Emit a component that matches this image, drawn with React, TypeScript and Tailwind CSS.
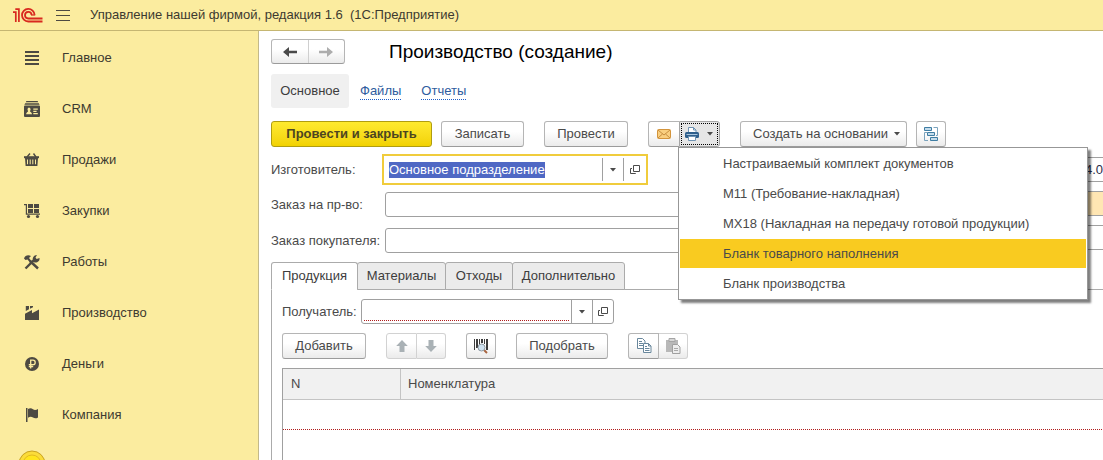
import { useEffect, useRef } from 'react';
import type { ReactNode } from 'react';
import clsx from 'clsx';

const base =
  'flex h-[26px] items-center justify-center border bg-linear-to-b from-white from-40% to-[#ebebeb] whitespace-nowrap';
const solid = 'rounded-[3px] border-[#b5b5b5] border-b-[#9b9b9b] text-[#4a4a4a]';

function Button({ children, className, label }: { children: ReactNode; className?: string; label?: string }) {
  return (
    <button type="button" aria-label={label} className={clsx(base, solid, className)}>
      {children}
    </button>
  );
}

function Caret() {
  return (
    <svg width="6" height="4" viewBox="0 0 6 4" className="shrink-0" aria-hidden="true">
      <path d="M0 0h6L3 3.6z" fill="#4a4a4a" />
    </svg>
  );
}

function OpenIcon() {
  return (
    <svg width="10" height="10" viewBox="0 0 10 10" fill="none" stroke="#4a4a4a" aria-hidden="true">
      <path d="M3.5.5h6v6h-6zM2 3.5H.5v5h5V8" />
    </svg>
  );
}

function Logo() {
  return (
    <svg width="30" height="15" viewBox="0 0 30 15" fill="none" stroke="#d8291f" aria-label="1С" role="img">
      <path d="M0 4.200h2.800V14" strokeWidth="1.700" />
      <path d="M2.300 1.100h3.600V14" strokeWidth="1.700" />
      <path d="M21.600 6.900A6.300 6.300 0 1 0 15.300 13.500H29.500" strokeWidth="1.800" />
      <path d="M18.600 7A3.300 3.300 0 1 0 15.300 10.500H29.500" strokeWidth="1.800" />
      <path d="M18 7h4.200" strokeWidth="1.200" />
    </svg>
  );
}

const dark = '#4d4a42';

const sections: { title: string; icon: ReactNode }[] = [
  {
    title: 'Главное',
    icon: <path d="M1 1h14v2H1zM1 5h14v2H1zM1 9h14v2H1zM1 13h14v2H1z" />,
  },
  {
    title: 'CRM',
    icon: (
      <>
        <path d="M2.4 0h11.2l.6 1.3H1.8zM1.2 2.3h13.6l.8 1.4H.4z" />
        <path
          fillRule="evenodd"
          d="M1 4.6h14a1 1 0 0 1 1 1V15a1 1 0 0 1-1 1H1a1 1 0 0 1-1-1V5.600a1 1 0 0 1 1-1zM5 6.400a1.700 2 0 0 0-.9 3.500C4 11.300 2.200 11 2.200 13.300h5.800C8 11 6.100 11.300 6 9.900A1.700 2 0 0 0 5 6.400zM9.300 7.500v1.200h4.500V7.500zM9.300 9.800V11h3.300V9.800zM9.300 12v1.200h4.500V12z"
        />
      </>
    ),
  },
  {
    title: 'Продажи',
    icon: (
      <>
        <path d="M3 5 6 1.500M12 5 9.500 1.500" stroke={dark} strokeWidth="1.400" />
        <path d="M0 4.200h15v2H0z" />
        <path
          fillRule="evenodd"
          d="M1 6h13l-.6 8H1.600zM3 7.500v4.800h1V7.500zM5.700 7.500v4.800h1V7.500zM8.300 7.500v4.800h1V7.500zM11 7.500v4.800h1V7.500z"
        />
      </>
    ),
  },
  {
    title: 'Закупки',
    icon: (
      <>
        <path d="M0 1h3v9.500h13v1.300H1.800V2.200H0z" />
        <path d="M4 1h5v4H4zM10 1h5v4h-5zM4 6h5v4H4zM10 6h5v4h-5z" />
        <circle cx="4.500" cy="13.500" r="1.600" />
        <circle cx="13.500" cy="13.500" r="1.600" />
      </>
    ),
  },
  {
    title: 'Работы',
    icon: (
      <>
        <path d="M1.500 14.500 9.500 6.500M6 7l8 7.500" stroke={dark} strokeWidth="2.400" />
        <path d="M0 4.500C1 1.500 4 .5 7 2L5 4l2.500 3L6 8.500 3.500 5.500 1.500 6z" />
        <path d="M9 7.500C8 4 9.500 1 13 1l-1.500 2.500 1.200 1.400L15.500 4C16 7.500 13 9 10 8.300z" />
      </>
    ),
  },
  {
    title: 'Производство',
    icon: <path d="M1.800 1H5v3.200L1.800 6zM6 1h3v1.200L6 3.800zM1 8.800 8 5v3.300L15 4.500V15H1z" />,
  },
  {
    title: 'Деньги',
    icon: (
      <>
        <circle cx="8" cy="8" r="7" />
        <path
          d="M6.700 12.500V4.200h2.300a2.200 2.200 0 0 1 0 4.400H4.800M4.800 10.500h4.400"
          fill="none"
          stroke="#fbec9f"
          strokeWidth="1.300"
        />
      </>
    ),
  },
  {
    title: 'Компания',
    icon: <path d="M2 1h1.500v14H2zM4 2c2-1 3.500-.8 5 .3 1.500 1 3.500.6 5-.3v8.500c-1.800 1.200-3.600 1-5 0s-3.200-1-5 .2z" />,
  },
];

function Coin() {
  return (
    <svg width="28" height="28" viewBox="0 0 28 28" aria-hidden="true">
      <circle cx="14" cy="14" r="13" fill="#fbdc3a" stroke="#c9a321" />
      <circle cx="14" cy="14" r="9" fill="#ffe51f" stroke="#e3bb20" />
    </svg>
  );
}

function NavArrow({ color, flip }: { color: string; flip?: boolean }) {
  return (
    <svg width="14" height="12" viewBox="0 0 14 12" className={flip ? '-scale-x-100' : ''} aria-hidden="true">
      <path d="M6 1v3.700h8v2.600H6V11L0 6z" fill={color} />
    </svg>
  );
}

function MoveArrow({ flip }: { flip?: boolean }) {
  return (
    <svg width="12" height="12" viewBox="0 0 12 12" className={flip ? '-scale-y-100' : ''} aria-hidden="true">
      <path d="M6 0l5.800 6H8.500v6h-5V6H.2z" fill="#a9b1b5" />
    </svg>
  );
}

function Envelope() {
  return (
    <svg width="14" height="10" viewBox="0 0 14 10" aria-hidden="true">
      <rect x=".5" y=".5" width="13" height="9" rx="1" fill="#f9cf80" stroke="#d3943c" />
      <path d="M1 1l6 5 6-5M1 9l4.500-4M13 9 8.500 5" fill="none" stroke="#c08436" strokeWidth=".9" />
    </svg>
  );
}

function Printer() {
  return (
    <svg width="14" height="14" viewBox="0 0 14 14" aria-hidden="true">
      <path d="M3.500 6V.5h5l2.500 2.500v3" fill="#fff" stroke="#6f93b3" />
      <path d="M8.500.5V3H11" fill="none" stroke="#6f93b3" />
      <rect y="5" width="14" height="6" rx="1.500" fill="#2f5f8c" />
      <path d="M1.500 7.500h11" stroke="#a9c6de" />
      <path d="M3.500 9.500h7v4h-7z" fill="#fff" stroke="#6f93b3" />
    </svg>
  );
}

function Structure() {
  return (
    <svg width="14" height="14" viewBox="0 0 14 14" fill="none" aria-hidden="true">
      <path d="M3 5.500H.5v8H4M9.500.5h4v8H12" stroke="#7ba3bd" />
      <path d="M.5.5h7v3h-7zM3.500 5.500h7v3h-7zM6.500 10.500h7v3h-7z" fill="#c3dcec" stroke="#3f7da3" />
    </svg>
  );
}

function Barcode() {
  return (
    <svg width="16" height="16" viewBox="0 0 16 16" aria-hidden="true">
      <path d="M1 1h1v11H1zM3 1h2v9H3zM6 1h1v6H6zM8 1h2v4H8zM11 1h1v5h-1zM13 1h2v11h-2z" fill="#3d3d3d" />
      <path d="M11 12l3 3" stroke="#a8643f" strokeWidth="2" />
      <circle cx="8.500" cy="9.500" r="3.500" fill="#cfe2f0" stroke="#8f9aa3" />
    </svg>
  );
}

function Copy() {
  return (
    <svg width="16" height="16" viewBox="0 0 16 16" fill="#fff" stroke="#69879c" aria-hidden="true">
      <path d="M1.500.5h5l2.500 2.500v7.500h-7.500z" />
      <path d="M3 3.500h3M3 5.500h4M3 7.500h4" />
      <path d="M7.500 5.500h5l2.500 2.500v6.500H7.500z" />
      <path d="M12.500 5.500V8H15M9 8.500h2M9 10.500h4.500M9 12.500h4.500" fill="none" />
    </svg>
  );
}

function Paste() {
  return (
    <svg width="16" height="16" viewBox="0 0 16 16" aria-hidden="true">
      <path d="M1 2h12v12H1z" fill="#b8b8b8" />
      <path d="M4 .5h6v3H4z" fill="#d6d6d6" stroke="#a5a5a5" />
      <path d="M7.500 6.500h5L15 9v6.500H7.500z" fill="#ededed" stroke="#a0a0a0" />
      <path d="M9 10.500h4M9 12.500h4" stroke="#a9a9a9" />
    </svg>
  );
}

const printForms = [
  'Настраиваемый комплект документов',
  'М11 (Требование-накладная)',
  'МХ18 (Накладная на передачу готовой продукции)',
  'Бланк товарного наполнения',
  'Бланк производства',
];

function PrintMenu() {
  return (
    <div
      role="menu"
      className="absolute top-full -left-px z-10 flex w-[410px] flex-col gap-px border border-[#979797] bg-white p-px shadow-[3px_3px_2px_rgba(0,0,0,0.5)]"
    >
      {printForms.map((title, i) => (
        <button
          key={title}
          type="button"
          role="menuitem"
          className={clsx('h-[29px] pl-[43px] text-left whitespace-nowrap text-[#4a4a4a]', i === 3 && 'bg-[#f9cb20]')}
        >
          {title}
        </button>
      ))}
    </div>
  );
}

const tabs = [
  { title: 'Продукция', width: 'w-[87px]' },
  { title: 'Материалы', width: 'w-[89px]' },
  { title: 'Отходы', width: 'w-[68px]' },
  { title: 'Дополнительно', width: 'w-[113px]' },
];
const field = 'h-[25px] rounded-[3px] border border-[#a0a0a0] bg-white';

export default function App() {
  const maker = useRef<HTMLInputElement>(null);
  useEffect(() => {
    maker.current?.focus();
    maker.current?.select();
  }, []);

  return (
    <div className="flex h-screen flex-col overflow-hidden bg-white font-['Liberation_Sans',Arial,sans-serif] text-[13px] leading-4 text-[#4a4a4a]">
      <header className="flex h-[31px] shrink-0 items-center border-b border-[#c5b672] bg-[#fbec9f] pl-[13px] text-[#3d3a30]">
        <Logo />
        <button type="button" aria-label="Меню" className="ml-[13px] flex w-[14px] flex-col gap-1">
          <span className="h-px bg-[#4d4a42]" />
          <span className="h-px bg-[#4d4a42]" />
          <span className="h-px bg-[#4d4a42]" />
        </button>
        <span className="ml-5 whitespace-pre">Управление нашей фирмой, редакция 1.6  (1С:Предприятие)</span>
      </header>

      <div className="flex min-h-0 flex-1">
        <nav className="flex w-[259px] shrink-0 flex-col overflow-hidden border-r border-[#c3b98a] bg-[#fbec9f] pt-px text-[#3d3a30]">
          {sections.map((s) => (
            <a key={s.title} href="#" className="flex h-[51px] shrink-0 items-center gap-[22px] pl-6">
              <svg width="16" height="16" viewBox="0 0 16 16" fill={dark} aria-hidden="true">
                {s.icon}
              </svg>
              {s.title}
            </a>
          ))}
          <a href="#" aria-label="Ещё" className="mt-2.5 shrink-0 pl-[18px]">
            <Coin />
          </a>
        </nav>

        <main className="flex min-w-0 flex-1 flex-col overflow-hidden pt-2 pl-3">
          <div className="flex shrink-0 items-center gap-11">
            <div className="flex h-[25px] w-[74px] rounded-[3px] border border-[#b5b5b5] border-b-[#9b9b9b] bg-linear-to-b from-white from-40% to-[#ebebeb]">
              <button type="button" aria-label="Назад" className="flex flex-1 items-center justify-center border-r border-[#cfcfcf]">
                <NavArrow color="#4a4a4a" />
              </button>
              <button type="button" aria-label="Вперед" className="flex flex-1 items-center justify-center">
                <NavArrow color="#adadad" flip />
              </button>
            </div>
            <h1 className="text-[19px] leading-6 text-black">Производство (создание)</h1>
          </div>

          <div className="mt-2.5 flex h-[34px] shrink-0 items-center">
            <a
              href="#"
              className="flex h-full w-[78px] items-center justify-center rounded-[3px] bg-[#f0f0f0] text-[#3d3d3d]"
            >
              Основное
            </a>
            <a href="#" className="ml-[11px] border-b border-dotted border-[#1f5fc8] text-[#2e5c9e]">
              Файлы
            </a>
            <a href="#" className="ml-5 border-b border-dotted border-[#1f5fc8] text-[#2e5c9e]">
              Отчеты
            </a>
          </div>

          <div className="mt-[13px] flex shrink-0">
            <button
              type="button"
              className="h-[26px] w-[161px] rounded-[3px] border border-[#b09d10] bg-linear-to-b from-[#ffea2e] to-[#f2d200] font-bold whitespace-nowrap text-[#4d4520]"
            >
              Провести и закрыть
            </button>
            <Button className="ml-[9px] w-[83px]">Записать</Button>
            <Button className="ml-5 w-[84px]">Провести</Button>
            <div className="ml-5 flex">
              <button type="button" aria-label="Отправить" className={clsx(base, solid, 'w-[31px] rounded-r-none border-r-0')}>
                <Envelope />
              </button>
              <div className="relative flex">
                <button
                  type="button"
                  aria-label="Печать"
                  className="flex h-[26px] w-[41px] items-center rounded-r-[3px] border border-[#a5a5a5] bg-[#e6e6e6] p-px"
                >
                  <span className="flex h-full w-full items-center justify-between border border-dotted border-black pr-1 pl-[3px]">
                    <Printer />
                    <Caret />
                  </span>
                </button>
                <PrintMenu />
              </div>
            </div>
            <Button className="ml-5 w-[167px] gap-1.5 pl-1.5">
              Создать на основании
              <Caret />
            </Button>
            <Button className="ml-[9px] w-[30px]" label="Структура подчиненности">
              <Structure />
            </Button>
          </div>

          <div className="mt-[7px] flex shrink-0 gap-2">
            <div className="flex w-[797px] shrink-0 flex-col">
              <div className="flex items-center">
                <label htmlFor="maker" className="w-[111px]">
                  Изготовитель:
                </label>
                <div className="flex h-[31px] w-[266px] items-stretch border-2 border-[#f0cc3c] py-0.5">
                  <input
                    id="maker"
                    ref={maker}
                    defaultValue="Основное подразделение"
                    className="min-w-0 flex-1 pl-[5px] outline-none selection:bg-[#4f68c4] selection:text-white"
                  />
                  <button type="button" aria-label="Выбрать" className="flex w-[21px] items-center justify-center border-l border-[#a0a0a0]">
                    <Caret />
                  </button>
                  <button type="button" aria-label="Открыть" className="flex w-[23px] items-center justify-center border-l border-[#a0a0a0]">
                    <OpenIcon />
                  </button>
                </div>
              </div>
              <div className="mt-[7px] flex items-center">
                <label htmlFor="order" className="w-[114px]">
                  Заказ на пр-во:
                </label>
                <input id="order" className={clsx(field, 'min-w-0 flex-1 px-1')} />
              </div>
              <div className="mt-[11px] flex items-center">
                <label htmlFor="client" className="w-[114px] whitespace-nowrap">
                  Заказ покупателя:
                </label>
                <input id="client" className={clsx(field, 'min-w-0 flex-1 px-1')} />
              </div>
            </div>
            <div className="flex min-w-0 flex-1 flex-col gap-[9px] pt-[3px]">
              <input aria-label="Дата" defaultValue="4.03" className={clsx(field, 'w-full rounded-r-none border-r-0 pl-2 text-[#2c2c48]')} />
              <input
                aria-label="Состояние"
                className="h-[25px] w-full rounded-l-[3px] border border-r-0 border-[#a0a0a0] bg-[#ffe6b3]"
              />
              <input aria-label="Организация" className={clsx(field, 'w-full rounded-r-none border-r-0')} />
            </div>
          </div>

          <div role="tablist" className="relative z-1 mt-[9px] -mb-px flex h-7 shrink-0">
            {tabs.map((t, i) => (
              <button
                key={t.title}
                type="button"
                role="tab"
                aria-selected={i === 0}
                className={clsx(
                  'rounded-t-[3px] border text-[#3d3d3d]',
                  t.width,
                  i === 0 ? 'border-[#ababab] border-b-white bg-white' : '-ml-px border-[#ababab] bg-[#ebebeb]',
                )}
              >
                {t.title}
              </button>
            ))}
          </div>

          <section className="flex min-h-0 flex-1 flex-col border-t border-l border-[#ababab] pt-[9px] pl-2.5">
            <div className="flex shrink-0 items-center">
              <label htmlFor="receiver" className="w-[79px]">
                Получатель:
              </label>
              <div className={clsx(field, 'flex w-[253px] items-stretch')}>
                <input
                  id="receiver"
                  className="mx-0.5 mb-0.5 min-w-0 flex-1 border-b border-dotted border-[#b01c1c] outline-none"
                />
                <button type="button" aria-label="Выбрать" className="flex w-[21px] items-center justify-center border-l border-[#a0a0a0]">
                  <Caret />
                </button>
                <button type="button" aria-label="Открыть" className="flex w-[21px] items-center justify-center border-l border-[#a0a0a0]">
                  <OpenIcon />
                </button>
              </div>
            </div>

            <div className="mt-[9px] flex shrink-0 gap-5">
              <Button className="w-[84px]">Добавить</Button>
              <div className="flex">
                <button type="button" aria-label="Вверх" className={clsx(base, 'w-[31px] rounded-l-[3px] border-[#d2d2d2]')}>
                  <MoveArrow />
                </button>
                <button type="button" aria-label="Вниз" className={clsx(base, 'w-[29px] rounded-r-[3px] border-l-0 border-[#d2d2d2]')}>
                  <MoveArrow flip />
                </button>
              </div>
              <Button className="w-[30px]" label="Поиск по штрихкоду">
                <Barcode />
              </Button>
              <Button className="w-[92px]">Подобрать</Button>
              <div className="flex">
                <button type="button" aria-label="Копировать" className={clsx(base, solid, 'w-[31px] rounded-r-none')}>
                  <Copy />
                </button>
                <button type="button" aria-label="Вставить" className={clsx(base, 'w-[29px] rounded-r-[3px] border-l-0 border-[#d2d2d2]')}>
                  <Paste />
                </button>
              </div>
            </div>

            <div className="mt-[9px] min-h-0 flex-1 border-t border-l border-[#a0a0a0]">
              <table className="w-full table-fixed border-separate border-spacing-0">
                <thead>
                  <tr className="h-[31px] bg-[#f1f1f1] text-left">
                    <th className="w-[118px] border-r border-b border-[#c4c4c4] pl-2 font-normal">N</th>
                    <th className="border-b border-[#c4c4c4] pl-[7px] font-normal">Номенклатура</th>
                  </tr>
                </thead>
                <tbody>
                  <tr>
                    <td colSpan={2} className="p-0">
                      <div className="h-[29px]" />
                      <div className="h-px bg-[repeating-linear-gradient(90deg,#b01c1c_0_1px,#ffffff_1px_2px)]" />
                    </td>
                  </tr>
                </tbody>
              </table>
            </div>
          </section>
        </main>
      </div>
    </div>
  );
}
